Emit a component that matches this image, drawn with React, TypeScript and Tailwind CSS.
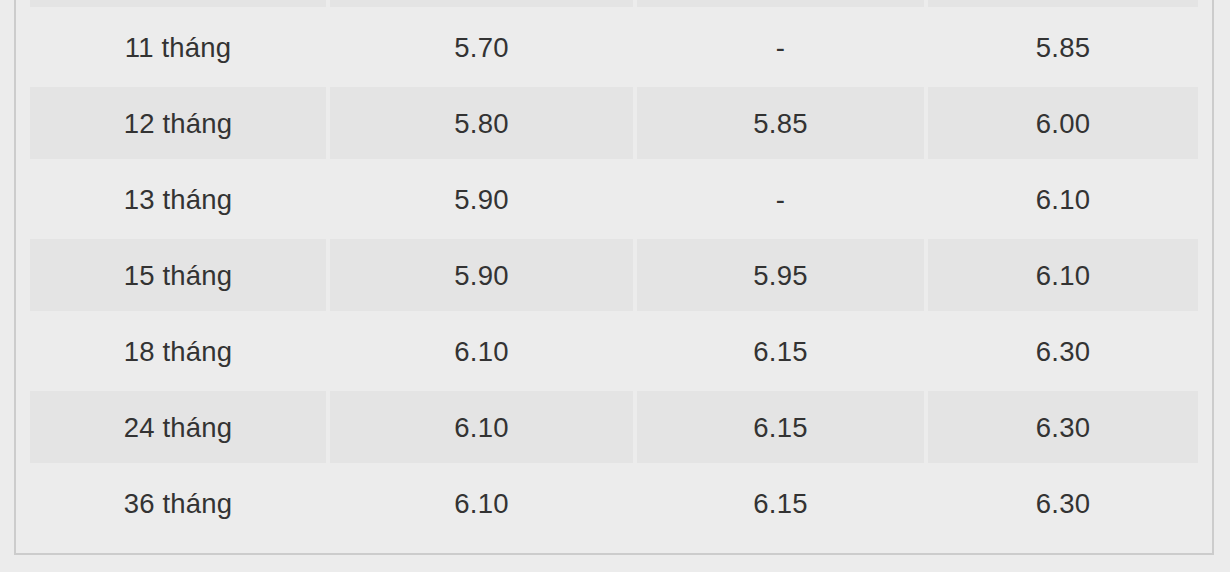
import React from "react";

const rows: [string, string, string, string][] = [
  ["", "", "", ""],
  ["11 tháng", "5.70", "-", "5.85"],
  ["12 tháng", "5.80", "5.85", "6.00"],
  ["13 tháng", "5.90", "-", "6.10"],
  ["15 tháng", "5.90", "5.95", "6.10"],
  ["18 tháng", "6.10", "6.15", "6.30"],
  ["24 tháng", "6.10", "6.15", "6.30"],
  ["36 tháng", "6.10", "6.15", "6.30"],
];

const App: React.FC = () => {
  return (
    <div className="min-h-screen w-full bg-[#ececec] pl-[14px] font-['Liberation_Sans',Arial,sans-serif] text-[#333333] overflow-hidden h-[572px]">
      <div className="mt-[-81px] w-[1200px] border-2 border-[#cccccc] p-[14px]">
        {/* Interest rate table */}
        <div className="grid grid-cols-[296px_303px_287px_270px] gap-1">
          {rows.map((row, i) =>
            row.map((cell, j) => (
              <div
                key={`${i}-${j}`}
                className={`flex h-[72px] items-center justify-center pt-[2px] text-[27.5px] tracking-[0.2px] ${
                  i % 2 === 0 ? "bg-[#e4e4e4]" : "bg-[#ececec]"
                }`}
              >
                {cell}
              </div>
            ))
          )}
        </div>
      </div>
    </div>
  );
};

export default App;
